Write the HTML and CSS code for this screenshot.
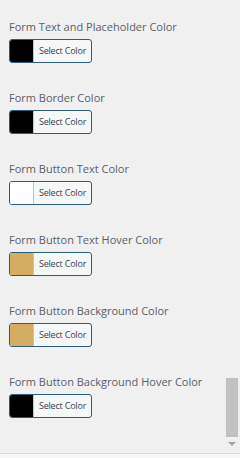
FILE: index.html
```html
<!DOCTYPE html>
<html lang="en">
<head>
  <meta charset="UTF-8" />
  <title>Form Colors</title>
  <link rel="stylesheet" href="styles.css">
</head>
<body>
  <div class="frame">
    <div class="scroll-area">
      <div class="fields">
        <div class="field">
          <label>Form Text and Placeholder Color</label>
          <button class="color-btn"><span class="swatch" style="background:#000000"></span><span class="btn-text">Select Color</span></button>
        </div>
        <div class="field">
          <label>Form Border Color</label>
          <button class="color-btn"><span class="swatch" style="background:#000000"></span><span class="btn-text">Select Color</span></button>
        </div>
        <div class="field">
          <label>Form Button Text Color</label>
          <button class="color-btn"><span class="swatch" style="background:#ffffff"></span><span class="btn-text">Select Color</span></button>
        </div>
        <div class="field">
          <label>Form Button Text Hover Color</label>
          <button class="color-btn"><span class="swatch" style="background:#d4ac62"></span><span class="btn-text">Select Color</span></button>
        </div>
        <div class="field">
          <label>Form Button Background Color</label>
          <button class="color-btn"><span class="swatch" style="background:#d4ac62"></span><span class="btn-text">Select Color</span></button>
        </div>
        <div class="field">
          <label>Form Button Background Hover Color</label>
          <button class="color-btn"><span class="swatch" style="background:#000000"></span><span class="btn-text">Select Color</span></button>
        </div>
      </div>
      <div class="scrollbar">
        <div class="thumb"></div>
        <div class="arrow"></div>
      </div>
    </div>
    <div class="footer"></div>
  </div>
</body>
</html>
```

FILE: styles.css
```css
* {
  box-sizing: border-box;
  margin: 0;
  padding: 0;
}

body {
  background-color: #f0f0f1;
  font-family: 'Open Sans', 'Noto Sans', sans-serif;
  color: #50575e;
}

.frame {
  display: flex;
  flex-direction: column;
  width: 240px;
  height: 458px;
}

.scroll-area {
  display: flex;
  height: 453px;
}

.fields {
  flex-grow: 1;
  padding: 19px 0 0 9px;
}

.field {
  height: 71px;
}

.field label {
  display: block;
  font-size: 11px;
  line-height: 16px;
  color: #5a6067;
  white-space: nowrap;
  margin-bottom: 4px;
}

.color-btn {
  display: flex;
  align-items: stretch;
  width: 83px;
  height: 24px;
  border: 1px solid #2c5d7c;
  border-radius: 3px;
  background: #f6f7f7;
  overflow: hidden;
  font-family: 'Open Sans', 'Noto Sans', sans-serif;
  cursor: pointer;
}

.swatch {
  width: 24px;
  border-right: 1px solid #c3c4c7;
}

.btn-text {
  flex-grow: 1;
  font-size: 9px;
  line-height: 22px;
  color: #3c434a;
  text-align: center;
  letter-spacing: -0.2px;
}

.scrollbar {
  display: flex;
  flex-direction: column;
  align-items: center;
  width: 14px;
  margin-right: 1px;
}

.thumb {
  width: 12px;
  height: 59px;
  margin-top: 378px;
  background-color: #c1c1c1;
}

.arrow {
  margin-top: 5px;
  width: 0;
  height: 0;
  border-left: 4px solid transparent;
  border-right: 4px solid transparent;
  border-top: 4px solid #a3a3a3;
}

.footer {
  border-top: 1px solid #dcdcde;
  flex-grow: 1;
  background-color: #f6f7f7;
}
```
